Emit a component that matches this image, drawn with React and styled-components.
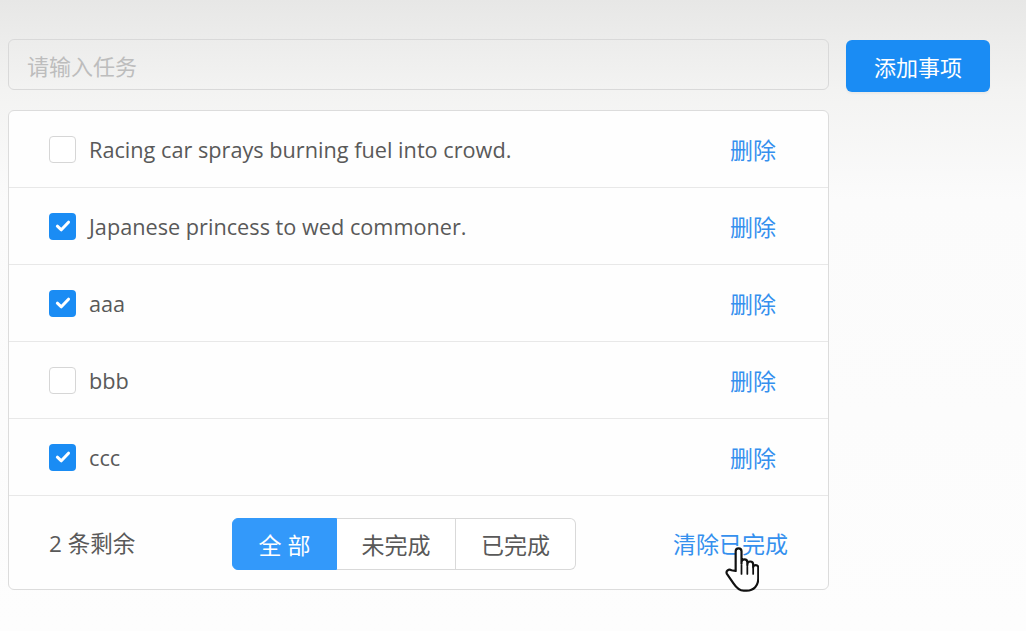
import React from "react";
import styled, { createGlobalStyle } from "styled-components";

const Global = createGlobalStyle`
  html, body { margin: 0; padding: 0; }
  body {
    background: linear-gradient(to bottom, #e7e7e6 0px, #f3f3f2 90px, #fbfbfb 200px, #fdfdfd 631px);
    min-height: 631px;
    font-family: "Open Sans", "Noto Sans CJK SC", sans-serif;
  }
`;

const Page = styled.div`
  padding: 39px 0 0 8px;
  display: flex;
  gap: 17px;
  align-items: flex-start;
`;

const Main = styled.div`
  width: 821px;
  display: flex;
  flex-direction: column;
  gap: 20px;
`;

const Input = styled.input`
  box-sizing: border-box;
  height: 51px;
  width: 100%;
  border: 1.5px solid #d9d9d9;
  border-radius: 6px;
  background: transparent;
  padding: 0 18px;
  font-size: 22px;
  font-family: "Noto Sans CJK SC", sans-serif;
  color: #555;
  outline: none;
  &::placeholder { color: #bdbdbd; }
`;

const AddButton = styled.button`
  margin-top: 1px;
  width: 144px;
  height: 52px;
  border: none;
  border-radius: 6px;
  background: #1a8cf4;
  color: #fff;
  font-size: 22px;
  font-family: "Noto Sans CJK SC", sans-serif;
  box-shadow: 0 2px 2px rgba(0,0,0,0.04);
  padding: 0;
`;

const Card = styled.div`
  border: 1.5px solid #dcdcdc;
  border-radius: 6px;
  background: #fefefe;
`;

const Row = styled.div`
  height: 77px;
  box-sizing: border-box;
  display: flex;
  align-items: center;
  padding: 0 52px 0 40px;
  border-bottom: 1.5px solid #e8e8e8;
`;

const Box = styled.span`
  box-sizing: border-box;
  width: 27px;
  height: 27px;
  border-radius: 4px;
  border: ${p => (p.checked ? "none" : "1.5px solid #d6d6d6")};
  background: ${p => (p.checked ? "#1a8cf4" : "#fff")};
  display: inline-flex;
  align-items: center;
  justify-content: center;
  flex: none;
`;

const Label = styled.span`
  margin-left: 13px;
  flex: 1;
  font-size: 21.7px;
  color: #595959;
  font-family: "Open Sans", sans-serif;
`;

const LinkText = styled.span`
  color: #3590ee;
  font-size: 23px;
  font-family: "Noto Sans CJK SC", sans-serif;
  cursor: pointer;
`;

const Footer = styled.div`
  position: relative;
  height: 93px;
  display: flex;
  align-items: center;
  justify-content: space-between;
  padding: 0 40px 0 40px;
`;

const Count = styled.span`
  font-size: 22.5px;
  color: #595959;
  font-family: "Open Sans", "Noto Sans CJK SC", sans-serif;
`;

const Segments = styled.div`
  display: flex;
  height: 52px;
  margin-top: 2px;
`;

const Segment = styled.div`
  box-sizing: border-box;
  width: ${p => p.w}px;
  display: flex;
  align-items: center;
  justify-content: center;
  font-size: 23px;
  font-family: "Noto Sans CJK SC", sans-serif;
  letter-spacing: ${p => (p.spaced ? "6px" : "0")};
  text-indent: ${p => (p.spaced ? "6px" : "0")};
  color: ${p => (p.active ? "#fff" : "#595959")};
  background: ${p => (p.active ? "#3399fa" : "#fff")};
  border: 1.5px solid ${p => (p.active ? "#3399fa" : "#d9d9d9")};
  border-left-width: ${p => (p.first ? "1.5px" : "0")};
  &:first-child { border-radius: 6px 0 0 6px; }
  &:last-child { border-radius: 0 6px 6px 0; }
`;

const Cursor = styled.svg`
  position: absolute;
  left: 715px;
  top: 50px;
  width: 35px;
  height: 47px;
  pointer-events: none;
`;

const Check = () => (
  <svg width="18" height="18" viewBox="0 0 16 16">
    <path d="M3 8.2 L6.5 11.4 L12.9 4.6" fill="none" stroke="#fff" strokeWidth="2.7" strokeLinecap="round" strokeLinejoin="round" />
  </svg>
);

const todos = [
  { text: "Racing car sprays burning fuel into crowd.", done: false },
  { text: "Japanese princess to wed commoner.", done: true },
  { text: "aaa", done: true },
  { text: "bbb", done: false },
  { text: "ccc", done: true },
];

export default function App() {
  return (
    <>
      <Global />
      <Page>
        <Main>
          <Input placeholder="请输入任务" />
          <Card>
            {todos.map((t, i) => (
              <Row key={i}>
                <Box checked={t.done}>{t.done && <Check />}</Box>
                <Label>{t.text}</Label>
                <LinkText>删除</LinkText>
              </Row>
            ))}
            <Footer>
              <Count>2 条剩余</Count>
              <Segments>
                <Segment w={105} active first spaced>全部</Segment>
                <Segment w={119}>未完成</Segment>
                <Segment w={120}>已完成</Segment>
              </Segments>
              <LinkText>清除已完成</LinkText>
              <Cursor viewBox="0 0 24 32">
                <path
                  d="M8 17 V3.5 a2 2 0 0 1 4 0 V12 V11 a2 2 0 0 1 4 0 V13 V12.5 a2 2 0 0 1 4 0 V14.5 V14 a2 2 0 0 1 3.5 0 V22 c0 5 -3 8.5 -8 8.5 h-2 c-3 0 -5 -2 -7 -5 l-4.5 -6.5 a2 2 0 0 1 3 -2.5 Z"
                  fill="#fff"
                  stroke="#111"
                  strokeWidth="1.5"
                  strokeLinejoin="round"
                />
                <path d="M12 13 V19 M16 14 V19 M20 15 V19" stroke="#111" strokeWidth="1.2" strokeLinecap="round" />
              </Cursor>
            </Footer>
          </Card>
        </Main>
        <AddButton>添加事项</AddButton>
      </Page>
    </>
  );
}
